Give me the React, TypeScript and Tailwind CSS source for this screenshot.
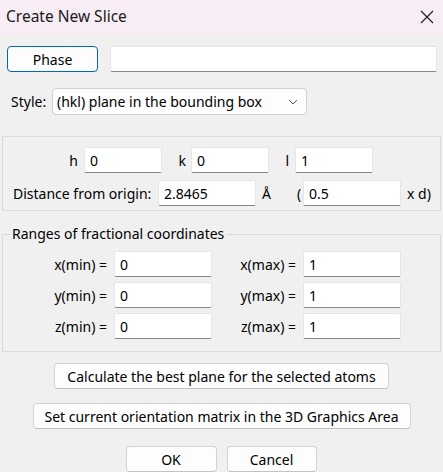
import React from 'react'

const font = { fontFamily: '"Noto Sans", "Open Sans", sans-serif' }

function Field({ value, w }: { value: string; w: string }) {
  return (
    <div className={`h-[26px] ${w} bg-white border border-[#e5e5e5] border-b-[#868686] rounded-[2px] pl-[5px] flex items-center text-[14px] text-black`}>
      {value}
    </div>
  )
}

function Btn({ text, cls }: { text: string; cls: string }) {
  return (
    <div className={`h-[26px] bg-[#fdfdfd] border border-[#d3d3d3] border-b-[#c2c2c2] rounded-[4px] flex items-center justify-center text-[14px] text-black ${cls}`}>
      {text}
    </div>
  )
}

function RangeRow({ axis, min, max }: { axis: string; min: string; max: string }) {
  return (
    <div className="flex items-center">
      <span className="w-[104px] text-right">{axis}(min) =</span>
      <div className="ml-[7px]"><Field value={min} w="w-[98px]" /></div>
      <span className="w-[84px] text-right">{axis}(max) =</span>
      <div className="ml-[7px]"><Field value={max} w="w-[98px]" /></div>
    </div>
  )
}

export default function App() {
  return (
    <div className="w-[443px] h-[472px] bg-[#f0f0f0] text-[14px] text-black overflow-hidden" style={font}>
      {/* title bar */}
      <div className="h-[34px] bg-[#f8edf4] flex items-center justify-between pl-[6px] pr-[9px]">
        <span className="text-[15.5px] text-[#1a1a1a]">Create New Slice</span>
        <svg width="14" height="14" viewBox="0 0 14 14">
          <path d="M1 1 L13 13 M13 1 L1 13" stroke="#1a1a1a" strokeWidth="1.1" fill="none" />
        </svg>
      </div>

      {/* phase row */}
      <div className="flex items-center mt-[12px] pl-[7px] pr-[6px] gap-[12px]">
        <div className="h-[26px] w-[91px] bg-[#fdfdfd] border border-[#0067c0] rounded-[4px] flex items-center justify-center">Phase</div>
        <div className="h-[26px] flex-1 bg-white border border-[#e5e5e5] border-b-[#868686] rounded-[2px]"></div>
      </div>

      {/* style row */}
      <div className="flex items-center mt-[16px] pl-[11px]">
        <span className="w-[41px]">Style:</span>
        <div className="h-[27px] w-[255px] bg-[#fdfdfd] border border-[#d0d0d0] rounded-[4px] flex items-center justify-between pl-[4px] pr-[8px]">
          <span>(hkl) plane in the bounding box</span>
          <svg width="10" height="6" viewBox="0 0 10 6">
            <path d="M1 1 L5 5 L9 1" stroke="#5a5a5a" strokeWidth="1" fill="none" />
          </svg>
        </div>
      </div>

      {/* hkl group */}
      <div className="mt-[21px] mx-[2px] h-[75px] border border-[#dadada] pt-[10px] flex flex-col gap-[7px]">
        <div className="flex items-center">
          <span className="w-[75px] text-right">h</span>
          <div className="ml-[6px]"><Field value="0" w="w-[78px]" /></div>
          <span className="w-[24px] text-right">k</span>
          <div className="ml-[5px]"><Field value="0" w="w-[78px]" /></div>
          <span className="w-[20px] text-right">l</span>
          <div className="ml-[6px]"><Field value="1" w="w-[78px]" /></div>
        </div>
        <div className="flex items-center">
          <span className="ml-[10px] w-[145px]">Distance from origin:</span>
          <Field value="2.8465" w="w-[98px]" />
          <span className="ml-[6px] w-[35px]">Å</span>
          <span className="w-[6px]">(</span>
          <Field value="0.5" w="w-[98px]" />
          <span className="ml-[6px]">x d)</span>
        </div>
      </div>

      {/* ranges group */}
      <fieldset className="mt-[14px] mx-[2px] h-[127px] border border-[#dadada] pl-[7px] pt-[8px] flex flex-col gap-[5px]">
        <legend className="px-[2px] leading-[18px]">Ranges of fractional coordinates</legend>
        <div className="-ml-[7px] flex flex-col gap-[5px]">
          <RangeRow axis="x" min="0" max="1" />
          <RangeRow axis="y" min="0" max="1" />
          <RangeRow axis="z" min="0" max="1" />
        </div>
      </fieldset>

      {/* action buttons */}
      <div className="flex flex-col items-center">
        <Btn text="Calculate the best plane for the selected atoms" cls="mt-[11px] w-[335px] h-[25px]" />
        <Btn text="Set current orientation matrix in the 3D Graphics Area" cls="mt-[14px] w-[378px] h-[25px]" />
        <div className="flex gap-[10px] mt-[17px] -ml-[1px]">
          <Btn text="OK" cls="w-[91px] h-[25px]" />
          <Btn text="Cancel" cls="w-[90px] h-[25px]" />
        </div>
      </div>
    </div>
  )
}
